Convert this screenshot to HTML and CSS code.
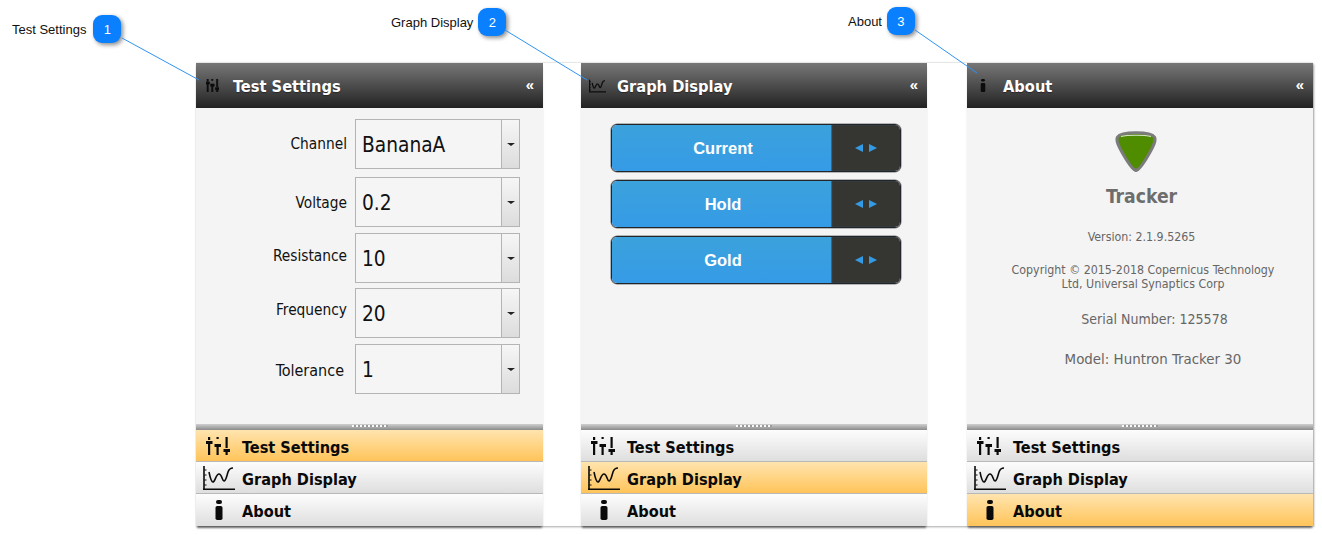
FILE: index.html
```html
<!DOCTYPE html>
<html lang="en">
<head>
<meta charset="utf-8">
<title>Tracker help</title>
<link rel="stylesheet" href="styles.css">
</head>
<body>
<svg class="defs" width="0" height="0" aria-hidden="true">
  <symbol id="sliders" viewBox="0 0 24 18" preserveAspectRatio="none">
    <path d="M2 0h2.200v3H2zM0 4h6.500v3H0zM2 7h2.200v11H2zM10.500 0h2.200v2h-2.200zM8.500 7h6.500v3H8.500zM10.500 10h2.200v8h-2.200zM19.500 0h2.200v11h-2.200zM17.500 12H24v3h-6.500zM19.500 15h2.200v3h-2.200z" fill="currentColor"/>
  </symbol>
  <symbol id="graph" viewBox="0 0 32 24">
    <path class="gline" d="M1 0v24M0 23.200h32" fill="none" stroke="currentColor"/>
    <path class="gtick" d="M1.500 4h2M1.500 9h2M1.500 14h2M1.500 19h2" fill="none" stroke="currentColor"/>
    <path class="gline" d="M6 6c1 5 2 10 4 10s3-8 6-8 3 7 5 7 3-6 4-9 3-4 5-4" fill="none" stroke="currentColor"/>
  </symbol>
  <symbol id="info" viewBox="0 0 8 20">
    <rect x="1" y="0" width="6" height="4" rx="2" fill="currentColor"/>
    <rect x="0.500" y="6" width="7" height="14" rx="1.800" fill="currentColor"/>
  </symbol>
</svg>

<div class="callout callout-a"><span class="callout-label">Test Settings</span><span class="badge">1</span></div>
<div class="callout callout-b"><span class="callout-label">Graph Display</span><span class="badge">2</span></div>
<div class="callout callout-c"><span class="callout-label">About</span><span class="badge">3</span></div>

<main class="stage">
  <section class="panel panel-wide">
    <header class="panel-head">
      <svg class="head-icon head-sliders"><use href="#sliders"/></svg>
      <h2 class="head-title">Test Settings</h2>
      <span class="collapse">«</span>
    </header>
    <div class="panel-body settings">
      <div class="field"><span class="field-label">Channel</span><div class="select"><span class="select-value">BananaA</span><span class="select-btn"><i class="caret"></i></span></div></div>
      <div class="field field-volt"><span class="field-label">Voltage</span><div class="select"><span class="select-value">0.2</span><span class="select-btn"><i class="caret"></i></span></div></div>
      <div class="field field-res"><span class="field-label">Resistance</span><div class="select"><span class="select-value">10</span><span class="select-btn"><i class="caret"></i></span></div></div>
      <div class="field field-freq"><span class="field-label">Frequency</span><div class="select"><span class="select-value">20</span><span class="select-btn"><i class="caret"></i></span></div></div>
      <div class="field field-tol"><span class="field-label">Tolerance</span><div class="select"><span class="select-value">1</span><span class="select-btn"><i class="caret"></i></span></div></div>
    </div>
    <div class="splitter"><span class="grip"></span></div>
    <nav class="nav">
      <a class="nav-item active"><span class="nav-icon"><svg class="ico-sliders"><use href="#sliders"/></svg></span>Test Settings</a>
      <a class="nav-item"><span class="nav-icon"><svg class="ico-graph"><use href="#graph"/></svg></span>Graph Display</a>
      <a class="nav-item"><span class="nav-icon"><svg class="ico-info"><use href="#info"/></svg></span>About</a>
    </nav>
  </section>

  <section class="panel">
    <header class="panel-head">
      <svg class="head-icon head-graph"><use href="#graph"/></svg>
      <h2 class="head-title">Graph Display</h2>
      <span class="collapse">«</span>
    </header>
    <div class="panel-body traces">
      <div class="toggle"><span class="toggle-name">Current</span><span class="toggle-arrows"><i class="arrow-left"></i><i class="arrow-right"></i></span></div>
      <div class="toggle"><span class="toggle-name">Hold</span><span class="toggle-arrows"><i class="arrow-left"></i><i class="arrow-right"></i></span></div>
      <div class="toggle"><span class="toggle-name">Gold</span><span class="toggle-arrows"><i class="arrow-left"></i><i class="arrow-right"></i></span></div>
    </div>
    <div class="splitter"><span class="grip"></span></div>
    <nav class="nav">
      <a class="nav-item"><span class="nav-icon"><svg class="ico-sliders"><use href="#sliders"/></svg></span>Test Settings</a>
      <a class="nav-item active"><span class="nav-icon"><svg class="ico-graph"><use href="#graph"/></svg></span>Graph Display</a>
      <a class="nav-item"><span class="nav-icon"><svg class="ico-info"><use href="#info"/></svg></span>About</a>
    </nav>
  </section>

  <section class="panel panel-last">
    <header class="panel-head">
      <svg class="head-icon head-info"><use href="#info"/></svg>
      <h2 class="head-title">About</h2>
      <span class="collapse">«</span>
    </header>
    <div class="panel-body about">
      <svg class="logo" viewBox="0 0 42 41" width="42" height="41">
        <path d="M21 1.800C12 1.800 4.500 3 2.500 6 .5 9.500 4 16 8 23c4 7 9 15.500 13 16.500 4-1 9-9.500 13-16.500 4-7 7.500-13.500 5.500-17C37.500 3 30 1.800 21 1.800z" fill="#4f8c00" stroke="#7b7b7b" stroke-width="3"/>
        <path d="M6 5.500C12 3.800 30 3.800 36 5.500" fill="none" stroke="#d5e4c8" stroke-width="1.200"/>
      </svg>
      <h1 class="app-name">Tracker</h1>
      <p class="version">Version: 2.1.9.5265</p>
      <p class="copyright">Copyright © 2015-2018 Copernicus Technology Ltd, Universal Synaptics Corp</p>
      <p class="meta serial">Serial Number: 125578</p>
      <p class="meta model">Model: Huntron Tracker 30</p>
    </div>
    <div class="splitter"><span class="grip"></span></div>
    <nav class="nav">
      <a class="nav-item"><span class="nav-icon"><svg class="ico-sliders"><use href="#sliders"/></svg></span>Test Settings</a>
      <a class="nav-item"><span class="nav-icon"><svg class="ico-graph"><use href="#graph"/></svg></span>Graph Display</a>
      <a class="nav-item active"><span class="nav-icon"><svg class="ico-info"><use href="#info"/></svg></span>About</a>
    </nav>
  </section>
</main>

<svg class="leaders" width="1322" height="535" aria-hidden="true">
  <path d="M122 38L199 80M505 30L587 80M915 30L977 73" fill="none" stroke="#2f93f5" stroke-width="1"/>
</svg>
</body>
</html>
```

FILE: styles.css
```css
* { box-sizing: border-box; }
html, body { margin: 0; height: 535px; overflow: hidden; background: #fff; }
body { position: relative; font-family: "DejaVu Sans Condensed", "DejaVu Sans", sans-serif; }
.defs { position: absolute; }
.leaders { position: absolute; left: 0; top: 0; pointer-events: none; }

.callout { position: absolute; display: flex; align-items: center; gap: 5px; font: 13px "Liberation Sans", sans-serif; color: #111; }
.callout-a { left: 12px; top: 15px; gap: 7px; }
.callout-b { left: 391px; top: 8px; }
.callout-c { left: 848px; top: 7px; }
.badge { width: 28px; height: 28px; border-radius: 9px; background: #0a80ff; color: #fff; display: flex; align-items: center; justify-content: center; font-size: 13px; box-shadow: 2px 2px 4px rgba(0,0,0,.45); }

.stage { display: flex; width: 1117px; height: 463px; margin: 63px 0 0 196px; box-shadow: 1px 1px 2px rgba(0,0,0,.35), 0 -1px 1px rgba(0,0,0,.07); }
.panel { width: 346px; height: 463px; margin-right: 38px; display: flex; flex-direction: column; background: #f4f4f4; box-shadow: 0 3px 2px -1px rgba(0,0,0,.5); }
.panel-wide { width: 347px; }
.panel-last { margin: 0 0 0 2px; }

.panel-head { height: 45px; flex: none; display: flex; align-items: center; padding: 0 9px 0 0; background: linear-gradient(#777, #222); color: #fff; position: relative; }
.head-icon { color: #0c0c0c; flex: none; }
.head-sliders { width: 13px; height: 13px; margin-left: 10px; margin-right: 14px; stroke: currentColor; stroke-width: 1; }
.head-graph { width: 17px; height: 16px; margin-left: 8px; margin-right: 11px; --gw: 2.400; --tw: 1.600; }
.head-info { width: 6px; height: 13px; margin-left: 13px; margin-right: 17px; }
.head-title { margin: 2px 0 0; font-size: 16.300px; font-weight: 700; flex: 1; text-shadow: 0 1px 1px rgba(0,0,0,.4); }
.collapse { font: 700 15px "Liberation Sans", sans-serif; margin-top: -3px; }
.gline { stroke-width: var(--gw, 1.600); }
.gtick { stroke-width: var(--tw, 1.200); }

.panel-body { flex: 1; min-height: 0; }
.settings { padding: 11px 23px 0 0; display: flex; flex-direction: column; gap: 8px; }
.field { display: flex; align-items: center; justify-content: flex-end; gap: 8px; height: 50px; flex: none; }
.field-res { margin-top: -2px; }
.field-freq { margin-top: -3px; }
.field-tol { margin-top: -2px; }
.field-label { font-size: 15.300px; color: #111; }
.field-volt .field-label { margin-top: 2px; }
.field-res .field-label { margin-bottom: 4px; }
.field-freq .field-label { margin-bottom: 6px; }
.field-tol .field-label { margin: 2px 3px 0 0; font-size: 16px; }
.select { width: 165px; height: 50px; border: 1px solid #b4b4b4; display: flex; background: #f5f5f5; }
.select-value { flex: 1; font-size: 20.700px; color: #111; padding: 2px 0 0 6px; display: flex; align-items: center; }
.select-btn { width: 18px; border-left: 1px solid #b4b4b4; background: linear-gradient(#f6f6f6, #dcdcdc); display: flex; align-items: center; justify-content: center; }
.caret { width: 0; height: 0; border: 4px solid transparent; border-bottom: 0; border-top: 3px solid #222; }

.traces { padding: 16px 26px 0 30px; display: flex; flex-direction: column; gap: 8px; }
.toggle { height: 48px; border: 1.500px solid #22252a; border-radius: 6px; display: flex; overflow: hidden; box-shadow: 0 0 0 .5px #777; }
.toggle-name { flex: 1; padding-left: 3px; background: linear-gradient(#3ba2dc, #369be6); color: #fff; font: 700 16.500px "Liberation Sans", sans-serif; display: flex; align-items: center; justify-content: center; }
.toggle-arrows { width: 69px; background: #353632; display: flex; align-items: center; justify-content: center; gap: 6px; box-shadow: inset 1px 0 1px #2b6f9f; }
.arrow-left, .arrow-right { width: 0; height: 0; border-top: 4.500px solid transparent; border-bottom: 4.500px solid transparent; }
.arrow-left { border-right: 8px solid #359ae4; }
.arrow-right { border-left: 8px solid #359ae4; }

.about { display: flex; flex-direction: column; align-items: center; color: #666; text-align: center; padding-top: 23px; }
.logo { flex: none; margin-right: 8px; }
.app-name { margin: 13px 0 0 3px; font-size: 19.200px; line-height: 24px; font-weight: 700; color: #6d6d6d; }
.version { margin: 21px 0 0 3px; font-size: 12.300px; line-height: 15px; }
.copyright { margin: 18px 0 0 6px; width: 272px; font-size: 12.300px; line-height: 14px; }
.meta { margin: 0; line-height: 18px; }
.serial { margin: 19px 0 0 29px; font-size: 14px; }
.model { margin: 22px 0 0 26px; font-size: 14.900px; }

.splitter { height: 6px; flex: none; background: linear-gradient(#cfcfcf, #8a8a8a); display: flex; justify-content: center; }
.grip { width: 36px; height: 2px; margin-top: 1px; background: repeating-linear-gradient(90deg, #f8f8f8 0 2px, #9a9a9a 2px 4px); }

.nav { flex: none; }
.nav-item { height: 32px; padding-top: 3px; display: flex; align-items: center; font-size: 16.200px; font-weight: 700; color: #0a0a0a; border-bottom: 1px solid #b8b8b8; background: linear-gradient(#fdfdfd, #dedede); }
.nav-item:last-child { border-bottom: 0; }
.nav-item.active { background: linear-gradient(#ffe4ae, #ffc45a); }
.nav-icon { width: 46px; flex: none; margin-top: -3px; display: flex; justify-content: center; align-items: center; color: #0a0a0a; }
.ico-sliders { width: 24px; height: 18px; margin-left: -2px; }
.ico-graph { width: 32px; height: 24px; }
.ico-info { width: 8px; height: 20px; }
```
